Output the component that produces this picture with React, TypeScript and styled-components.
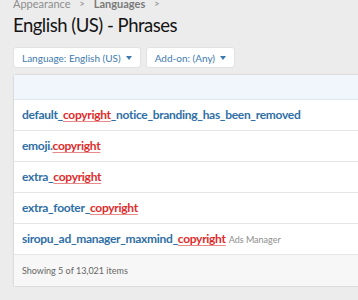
import React from 'react'
import styled, { createGlobalStyle } from 'styled-components'

const GlobalStyle = createGlobalStyle`
    html, body {
        margin: 0;
        padding: 0;
        background: #ececec;
        overflow: hidden;
        font-family: Lato, "Segoe UI", "DejaVu Sans", sans-serif;
    }
`

const Page = styled.div`
    padding: 0 0 0 13px;
    width: 400px;
`

const Breadcrumb = styled.div`
    display: flex;
    align-items: center;
    gap: 9px;
    height: 10px;
    margin-top: -1px;
    font-size: 11px;
    color: #8c8c8c;
    line-height: 10px;
`

const Crumb = styled.span<{ $current?: boolean }>`
    font-weight: ${p => (p.$current ? 700 : 400)};
    color: ${p => (p.$current ? '#7a7a7a' : '#8c8c8c')};
`

const Chevron = styled.span`
    font-size: 9px;
    font-weight: 700;
    color: #9a9a9a;
`

const Title = styled.h1`
    margin: 3px 0 0;
    font-size: 18.5px;
    font-weight: 400;
    letter-spacing: -0.5px;
    color: #141414;
    line-height: 26px;
`

const Filters = styled.div`
    display: flex;
    gap: 5px;
    margin-top: 9px;
`

const FilterButton = styled.button`
    display: inline-flex;
    align-items: center;
    gap: 5px;
    height: 21px;
    padding: 0 8px;
    background: #fff;
    border: 1px solid #e2e2e2;
    border-radius: 3px;
    color: #3d7ab0;
    font-family: inherit;
    font-size: 10px;
`

const Caret = styled.span`
    width: 0;
    height: 0;
    border-left: 3.5px solid transparent;
    border-right: 3.5px solid transparent;
    border-top: 4px solid #3d7ab0;
`

const Block = styled.div`
    margin-top: 6px;
    background: #fff;
    border: 1px solid #dcdcdc;
    border-radius: 3px;
    box-shadow: 0 1px 2px rgba(0, 0, 0, 0.05);
`

const BlockHeader = styled.div`
    height: 24px;
    background: #f0f6fc;
    border-bottom: 1px solid #dde5ee;
`

const Row = styled.div`
    display: flex;
    align-items: baseline;
    gap: 3px;
    height: 30px;
    padding: 0 8px;
    line-height: 30px;
    border-bottom: 1px solid #e6e6e6;
`

const PhraseLink = styled.a`
    font-size: 12px;
    font-weight: 700;
    letter-spacing: -0.3px;
    color: #2f6fa6;
    text-decoration: none;
`

const Highlight = styled.em`
    font-style: normal;
    color: #e02b2b;
    text-decoration: underline;
    text-decoration-color: #e98a8a;
    text-underline-offset: 2px;
`

const Hint = styled.span`
    font-size: 9px;
    color: #8e8e8e;
`

const Footer = styled.div`
    height: 31px;
    padding: 0 8px;
    line-height: 31px;
    background: #f7f7f7;
    font-size: 9px;
    color: #666;
`

const phrases = [
    { pre: 'default_', post: '_notice_branding_has_been_removed' },
    { pre: 'emoji.', post: '' },
    { pre: 'extra_', post: '' },
    { pre: 'extra_footer_', post: '' },
    { pre: 'siropu_ad_manager_maxmind_', post: '', hint: 'Ads Manager' },
]

const App = () => {
    return (
        <>
            <GlobalStyle />
            <Page>
                <Breadcrumb>
                    <Crumb>Appearance</Crumb>
                    <Chevron>&gt;</Chevron>
                    <Crumb $current>Languages</Crumb>
                    <Chevron>&gt;</Chevron>
                </Breadcrumb>
                <Title>English (US) - Phrases</Title>
                <Filters>
                    <FilterButton type='button'>Language: English (US) <Caret /></FilterButton>
                    <FilterButton type='button'>Add-on: (Any) <Caret /></FilterButton>
                </Filters>
                <Block>
                    <BlockHeader />
                    {phrases.map(p => (
                        <Row key={p.pre}>
                            <PhraseLink>
                                {p.pre}<Highlight>copyright</Highlight>{p.post}
                            </PhraseLink>
                            {p.hint ? <Hint>{p.hint}</Hint> : null}
                        </Row>
                    ))}
                    <Footer>Showing 5 of 13,021 items</Footer>
                </Block>
            </Page>
        </>
    )
}

export default App
